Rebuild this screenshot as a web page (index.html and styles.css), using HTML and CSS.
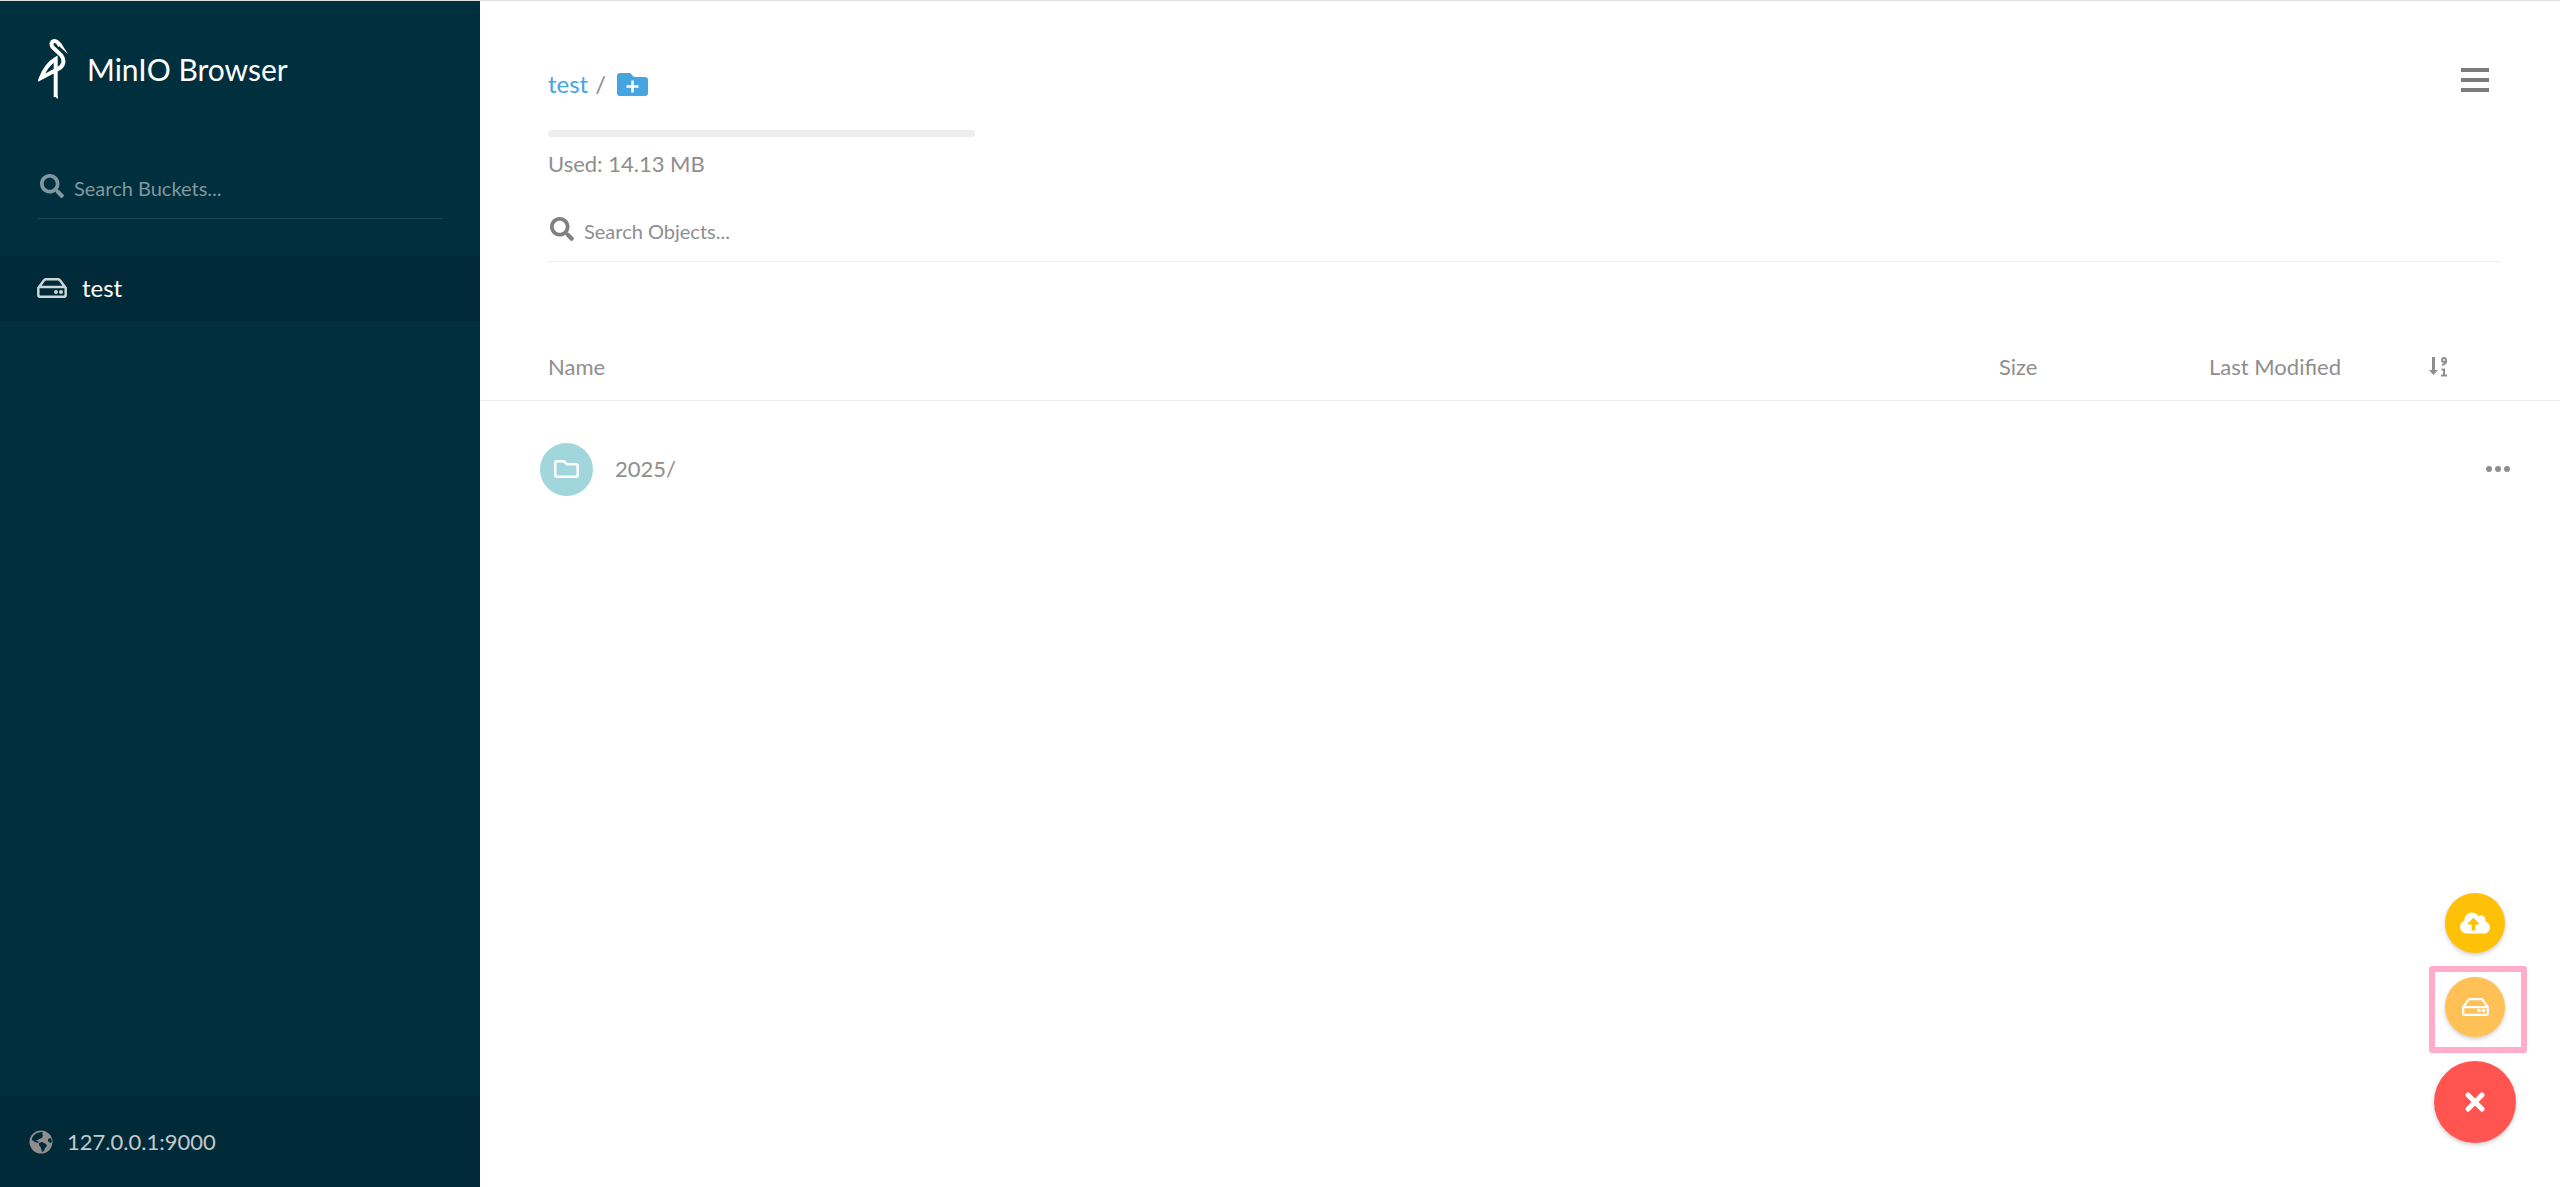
FILE: index.html
```
<!DOCTYPE html>
<html lang="en">
<head>
  <meta charset="UTF-8">
  <meta name="viewport" content="width=device-width, initial-scale=1.0">
  <title>MinIO Browser</title>
  <link rel="stylesheet" href="styles.css">
</head>
<body>
  <!-- Sidebar -->
  <aside class="sidebar">
    <div class="brand">
      <svg class="brand-logo" viewBox="0 0 30 62">
        <path fill="none" stroke="#fff" stroke-width="4" d="M22 8C18 0 11 3 14.500 9L23 17c4 5 3 11-3 14L3 40C6 32 11 25 17.700 21v38" />
        <path fill="#fff" d="m20 3 3 2 7 11-8-7ZM0 43l2-5 4 2ZM16 58h4v3Z" />
      </svg>
      <h1>MinIO Browser</h1>
    </div>

    <div class="search bucket-search">
      <svg viewBox="0 0 512 512"><path d="M505 442.700 405.300 343c-4.500-4.500-10.600-7-17-7H372c27.600-35.300 44-79.700 44-128C416 93.100 322.900 0 208 0S0 93.100 0 208s93.100 208 208 208c48.300 0 92.700-16.400 128-44v16.300c0 6.400 2.500 12.500 7 17l99.700 99.700c9.400 9.400 24.600 9.400 33.900 0l28.300-28.300c9.400-9.400 9.400-24.600.1-34zM208 336c-70.700 0-128-57.200-128-128 0-70.700 57.200-128 128-128 70.700 0 128 57.200 128 128 0 70.700-57.200 128-128 128z" /></svg>
      <input type="text" placeholder="Search Buckets..." aria-label="Search Buckets">
    </div>

    <nav class="buckets">
      <a class="bucket active" href="#">
        <svg viewBox="0 0 30 20" fill="none" stroke="currentColor" stroke-width="2.500"><path d="M1.300 10v7q0 1.700 1.700 1.700h24q1.700 0 1.700-1.700v-7L23 2.300q-1-1-2-1H9q-1 0-2 1ZM1.300 9h27.400" /><g fill="currentColor" stroke="none"><circle cx="19" cy="14" r="2" /><circle cx="24" cy="14" r="2" /></g></svg>
        test
      </a>
    </nav>

    <footer class="host">
      <svg viewBox="0 0 24 24"><circle cx="12" cy="12" r="11.500" fill="#8e8e8e" /><path fill="#002a37" d="m3 8 2-3 3-2 4-1h2l-1 2 1 1-1 3-3 1-1 1H7l1 1 2 1-1 1-3-1-3-2ZM10 13l3-1 4 2 1 2-2 2-1 3-2 1-1-4-2-3ZM19 9l3-1 1 4-2 1-2-2Z" /></svg>
      <a href="#">127.0.0.1:9000</a>
    </footer>
  </aside>

  <!-- Objects -->
  <main class="content">
    <header class="page-header">
      <div class="header-top">
        <div class="path">
          <a href="#">test</a>
          <span>/</span>
          <button class="new-folder" aria-label="New folder">
            <svg viewBox="0 0 31 23"><path fill="#46a5e0" d="M3 0h10l4 4h11q3 0 3 3v13q0 3-3 3H3q-3 0-3-3V3Q0 0 3 0Z" /><path stroke="#fff" stroke-width="2.500" d="M9.500 13.500h12M15.500 7.500v12" /></svg>
          </button>
        </div>
        <button class="menu" aria-label="Menu"><i></i><i></i><i></i></button>
      </div>
      <div class="usage">
        <div class="usage-bar"></div>
        <p>Used: 14.13 MB</p>
      </div>
      <div class="search object-search">
        <svg viewBox="0 0 512 512"><path d="M505 442.700 405.300 343c-4.500-4.500-10.600-7-17-7H372c27.600-35.300 44-79.700 44-128C416 93.100 322.900 0 208 0S0 93.100 0 208s93.100 208 208 208c48.300 0 92.700-16.400 128-44v16.300c0 6.400 2.500 12.500 7 17l99.700 99.700c9.400 9.400 24.600 9.400 33.900 0l28.300-28.300c9.400-9.400 9.400-24.600.1-34zM208 336c-70.700 0-128-57.200-128-128 0-70.700 57.200-128 128-128 70.700 0 128 57.200 128 128 0 70.700-57.200 128-128 128z" /></svg>
        <input type="text" placeholder="Search Objects..." aria-label="Search Objects">
      </div>
    </header>

    <table class="objects">
      <thead>
        <tr>
          <th class="col-name">Name</th>
          <th class="col-size">Size</th>
          <th class="col-modified">Last Modified</th>
          <th class="col-actions">
            <button aria-label="Sort">
              <svg class="sort-icon" viewBox="0 0 19 20"><path fill="currentColor" d="M3 0h3v13h3l-4.500 5L0 13h3Z" /><g fill="none" stroke="currentColor" stroke-width="2"><circle cx="15" cy="3" r="2" /><path d="M17 3q1 4-4 5M12.500 12.500H15v6M12 18.500h6" /></g></svg>
            </button>
          </th>
        </tr>
      </thead>
      <tbody>
        <tr>
          <td colspan="3">
            <div class="object">
              <span class="object-icon">
                <svg viewBox="0 0 25 18" fill="none" stroke="#fff" stroke-width="2.500"><path d="M3 1.300h7l3 3h9q1.700 0 1.700 1.700v9q0 1.700-1.700 1.700H3q-1.700 0-1.700-1.700V3q0-1.700 1.700-1.700Z" /></svg>
              </span>
              <a href="#">2025/</a>
            </div>
          </td>
          <td class="row-actions">
            <button aria-label="More actions">
              <svg class="dots" viewBox="0 0 24 6" fill="currentColor"><circle cx="3" cy="3" r="3" /><circle cx="12" cy="3" r="3" /><circle cx="21" cy="3" r="3" /></svg>
            </button>
          </td>
        </tr>
      </tbody>
    </table>
  </main>

  <!-- Floating actions -->
  <div class="actions">
    <button class="action upload" aria-label="Upload file">
      <svg viewBox="0 0 640 512"><path fill="#fff" d="M537.600 226.600c4.100-10.700 6.400-22.400 6.400-34.600 0-53-43-96-96-96-19.700 0-38.100 6-53.300 16.200C367 64.200 315.300 32 256 32c-88.400 0-160 71.600-160 160 0 2.700.1 5.400.2 8.100C40.200 219.800 0 273.200 0 336c0 79.500 64.500 144 144 144h368c70.700 0 128-57.300 128-128 0-61.900-44-113.600-102.400-125.400zM393.400 288H328v112c0 8.800-7.200 16-16 16h-48c-8.800 0-16-7.200-16-16V288h-65.400c-14.300 0-21.400-17.200-11.300-27.300l105.400-105.400c6.200-6.200 16.400-6.200 22.600 0l105.400 105.400c10.100 10.100 2.900 27.300-11.300 27.300z" /></svg>
    </button>
    <button class="action create" aria-label="Create bucket">
      <svg viewBox="0 0 30 20" fill="none" stroke="#fff" stroke-width="2.500"><path d="M1.300 10v7q0 1.700 1.700 1.700h24q1.700 0 1.700-1.700v-7L23 2.300q-1-1-2-1H9q-1 0-2 1ZM1.300 10h27.400" /><g fill="#fff" stroke="none"><circle cx="19" cy="14" r="2" /><circle cx="24" cy="14" r="2" /></g></svg>
    </button>
    <button class="action toggle" aria-label="Close">
      <svg viewBox="0 0 20 20"><path stroke="#fff" stroke-width="5" stroke-linecap="round" d="m3 3 14 14M17 3 3 17" /></svg>
    </button>
  </div>
</body>
</html>
```

FILE: styles.css
```
/* General Reset */
* {
  margin: 0;
  padding: 0;
  box-sizing: border-box;
}

body {
  display: flex;
  min-height: 100vh;
  border-top: 1px solid #e0e0e0;
  background: #fff;
  color: #8e8e8e;
  font-family: Lato, sans-serif;
  font-size: 22px;
  line-height: 34px;
}

a {
  color: inherit;
  text-decoration: none;
}

button {
  border: none;
  background: none;
  color: inherit;
  cursor: pointer;
}

svg {
  display: block;
  flex-shrink: 0;
}

/* Sidebar */
.sidebar {
  display: flex;
  flex-direction: column;
  flex-shrink: 0;
  width: 480px;
  background: #002f3e;
}

.brand {
  display: flex;
  align-items: center;
  gap: 19px;
  padding: 37px 38px 0;
  color: #fff;
}

.brand-logo {
  width: 30px;
  height: 62px;
}

.brand h1 {
  font-size: 30px;
  font-weight: 400;
}

.search {
  display: flex;
  align-items: center;
  gap: 10px;
  height: 58px;
  padding: 0 2px 4px;
  border-bottom: 1px solid #eee;
}

.search svg {
  width: 24px;
  height: 24px;
  margin-bottom: 4px;
  fill: #808080;
}

.search input {
  flex: 1;
  min-width: 0;
  border: none;
  outline: none;
  background: none;
  color: inherit;
  font-family: inherit;
  font-size: 20px;
}

.search input::placeholder {
  color: #8e8e8e;
}

.bucket-search {
  margin: 61px 37px 0 38px;
  border-color: #1a4451;
}

.bucket-search svg {
  fill: #80979e;
}

.bucket-search input::placeholder {
  color: #80979e;
}

.buckets {
  margin-top: 37px;
}

.bucket {
  display: flex;
  align-items: center;
  gap: 15px;
  height: 65px;
  padding: 0 37px 2px;
  color: #fff;
  font-size: 24px;
}

.bucket.active {
  background: #002a37;
}

.bucket svg {
  width: 30px;
  height: 20px;
  color: #ccd5d7;
}

.host {
  display: flex;
  align-items: center;
  gap: 14px;
  height: 91px;
  margin-top: auto;
  padding: 0 29px;
  background: #002a37;
  color: #c0cace;
}

.host svg {
  width: 24px;
  height: 24px;
}

/* Content */
.content {
  flex: 1;
  min-width: 0;
}

.page-header {
  padding: 66px 60px 0 68px;
}

.header-top {
  display: flex;
  align-items: flex-start;
  justify-content: space-between;
}

.path {
  display: flex;
  align-items: center;
  gap: 7px;
  font-size: 24px;
}

.path a {
  color: #46a5e0;
}

.new-folder {
  margin-left: 4px;
}

.new-folder svg {
  width: 31px;
  height: 23px;
}

.menu {
  display: flex;
  flex-direction: column;
  gap: 6px;
  width: 28px;
  margin: 1px 11px 0 0;
}

.menu i {
  width: 28px;
  height: 4px;
  background: #7b7b7b;
}

.usage-bar {
  width: 427px;
  height: 7px;
  margin: 29px 0 10px;
  border-radius: 3px;
  background: #eee;
}

.object-search {
  margin-top: 23px;
}

/* Objects table */
.objects {
  width: 100%;
  margin-top: 73px;
  border-collapse: collapse;
  table-layout: fixed;
}

.objects th {
  height: 65px;
  border-bottom: 1px solid #eee;
  font-weight: 400;
  text-align: left;
}

.objects .col-name {
  padding-left: 68px;
}

.col-size {
  width: 210px;
}

.col-modified {
  width: 220px;
}

.col-actions {
  width: 131px;
}

.col-actions button {
  display: block;
}

.sort-icon {
  width: 19px;
  height: 20px;
}

.objects td {
  height: 138px;
}

.object {
  display: flex;
  align-items: center;
  gap: 22px;
  padding-left: 60px;
}

.object-icon {
  display: flex;
  align-items: center;
  justify-content: center;
  width: 53px;
  height: 53px;
  border-radius: 50%;
  background: #a1d6dd;
}

.object-icon svg {
  width: 25px;
  height: 18px;
}

.row-actions button {
  display: block;
  margin-left: auto;
  padding-right: 50px;
}

.dots {
  width: 24px;
  height: 6px;
}

/* Floating actions */
.actions {
  position: fixed;
  right: 44px;
  bottom: 44px;
  display: flex;
  flex-direction: column;
  align-items: center;
  gap: 24px;
}

.action {
  display: flex;
  position: relative;
  align-items: center;
  justify-content: center;
  width: 60px;
  height: 60px;
  border-radius: 50%;
  box-shadow: 0 2px 4px rgba(0, 0, 0, 0.2);
}

.action svg {
  width: 30px;
  height: 24px;
}

.upload {
  background: #ffc107;
}

.create {
  background: #ffc155;
}

/* Frame around the create button */
.create::after {
  content: '';
  position: absolute;
  inset: -11px -22px -16px -16px;
  border: 6px solid #ffadcb;
  border-radius: 3px;
}

.create svg {
  width: 27px;
  height: 18px;
}

.toggle {
  width: 82px;
  height: 82px;
  background: #ff5450;
}

.toggle svg {
  width: 20px;
  height: 20px;
}
```
